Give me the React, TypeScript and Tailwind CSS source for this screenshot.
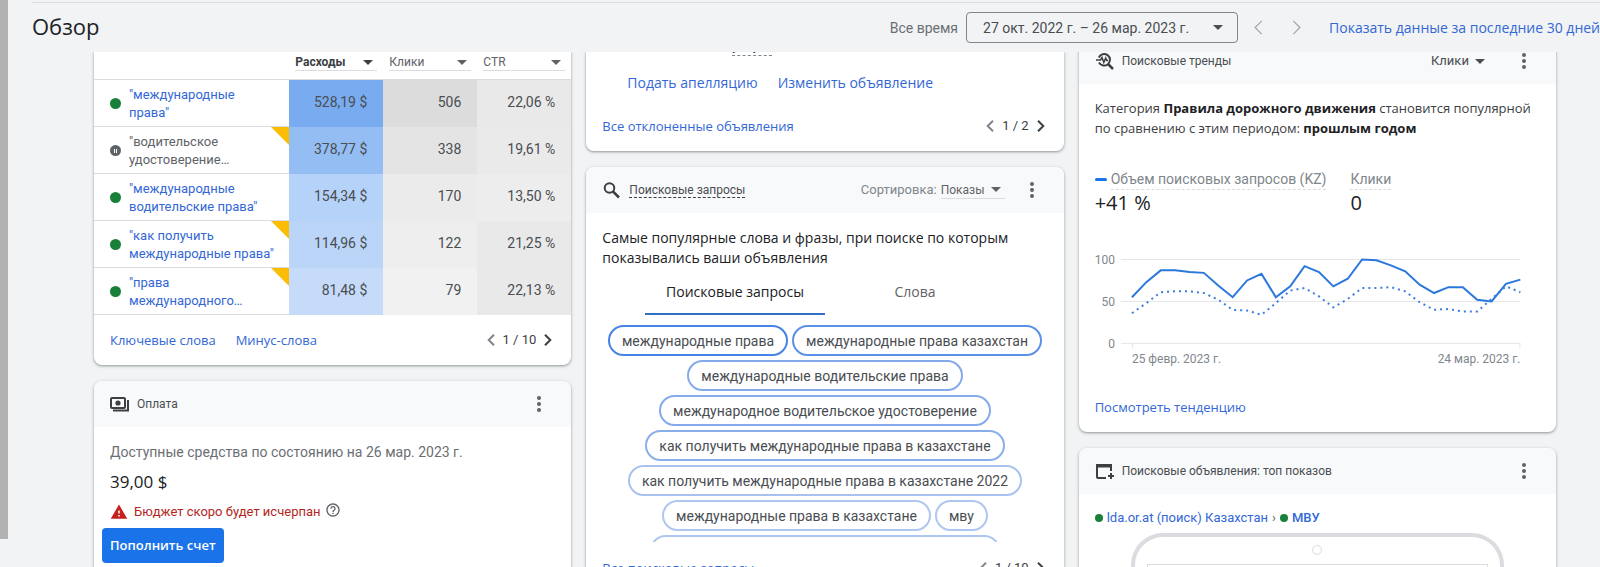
import type { ReactNode } from 'react';
import { MdHelpOutline, MdWarning } from 'react-icons/md';

const keywords = [
    { lines: ['"международные', 'права"'], cost: '528,19 $', clicks: '506', ctr: '22,06 %', costBg: 'bg-[#78abf0]', clicksBg: 'bg-[#dcdcdc]', ctrBg: 'bg-[#e9e9e9]' },
    { lines: ['"водительское', 'удостоверение…'], cost: '378,77 $', clicks: '338', ctr: '19,61 %', costBg: 'bg-[#94bdf4]', clicksBg: 'bg-[#e4e4e4]', ctrBg: 'bg-[#eaeaea]', paused: true, flagged: true },
    { lines: ['"международные', 'водительские права"'], cost: '154,34 $', clicks: '170', ctr: '13,50 %', costBg: 'bg-[#b5d3f9]', clicksBg: 'bg-[#ebebeb]', ctrBg: 'bg-[#ededed]' },
    { lines: ['"как получить', 'международные права"'], cost: '114,96 $', clicks: '122', ctr: '21,25 %', costBg: 'bg-[#bbd5f8]', clicksBg: 'bg-[#eeeeee]', ctrBg: 'bg-[#e9e9e9]', flagged: true },
    { lines: ['"права', 'международного…'], cost: '81,48 $', clicks: '79', ctr: '22,13 %', costBg: 'bg-[#c6dbf9]', clicksBg: 'bg-[#f1f1f1]', ctrBg: 'bg-[#e9e9e9]', flagged: true },
];

const queries = [
    { text: 'международные права', border: 'border-[#4583e6]' },
    { text: 'международные права казахстан', border: 'border-[#5a90e8]' },
    { text: 'международные водительские права', border: 'border-[#84aaeb]' },
    { text: 'международное водительское удостоверение', border: 'border-[#84aaeb]' },
    { text: 'как получить международные права в казахстане', border: 'border-[#8aaeea]' },
    { text: 'как получить международные права в казахстане 2022', border: 'border-[#a8c2f0]' },
    { text: 'международные права в казахстане', border: 'border-[#aec6f0]' },
    { text: 'мву', border: 'border-[#aec6f0]' },
    { text: 'международные водительские права рк', border: 'border-[#aec6f0]', wide: true },
];

const current = [55, 73, 87, 87, 85, 84, 69, 55, 75, 83, 55, 68, 92, 85, 68, 77, 100, 99, 93, 86, 70, 60, 67, 67, 52, 50, 71, 76];
const previous = [36, 48, 61, 62, 62, 60, 52, 40, 39, 34, 48, 63, 66, 56, 43, 53, 66, 66, 67, 62, 49, 40, 41, 38, 38, 53, 68, 61];

const toPoints = (values: number[]) =>
    values.map((v, i) => `${(37 + (i * 389) / 27).toFixed(1)},${(94.5 - v * 0.84).toFixed(1)}`).join(' ');

const Icon = ({ children }: { children: ReactNode }) => (
    <svg viewBox="0 0 20 20" className="size-5 shrink-0 text-[#3c4043]" fill="none" stroke="currentColor" strokeWidth="2">
        {children}
    </svg>
);

const Arrow = ({ className = '' }: { className?: string }) => (
    <svg viewBox="0 0 10 5" className={`w-[10px] h-[5px] fill-current ${className}`}>
        <path d="M0 0h10L5 5z" />
    </svg>
);

const Chevron = ({ dir, className }: { dir: 'left' | 'right'; className: string }) => (
    <svg viewBox="0 0 8 12" className={`fill-none stroke-current ${className}`}>
        <path d={dir === 'left' ? 'M7 .7 1.7 6 7 11.3' : 'M1 .7 6.3 6 1 11.3'} />
    </svg>
);

const Dropdown = ({ label, value, id, className = '' }: { label: string; value: string; id: string; className?: string }) => (
    <span className={`relative flex items-center ${className}`}>
        <select id={id} aria-label={label} className="w-full appearance-none bg-transparent outline-none pr-5">
            <option>{value}</option>
        </select>
        <Arrow className="absolute right-1 pointer-events-none" />
    </span>
);

const MoreButton = () => (
    <button type="button" aria-label="Ещё" className="w-4 h-6 flex items-center justify-center text-[#5f6368]">
        <svg viewBox="0 0 4 16" className="w-1 h-4 fill-current">
            <circle cx="2" cy="2" r="2" />
            <circle cx="2" cy="8" r="2" />
            <circle cx="2" cy="14" r="2" />
        </svg>
    </button>
);

const Pager = ({ total }: { total: number }) => (
    <div className="flex items-center gap-2 font-['Roboto',sans-serif] text-[13px] leading-5 text-[#3c4043]">
        <button type="button" aria-label="Назад" className="text-[#80868b]">
            <Chevron dir="left" className="w-2 h-3 stroke-2" />
        </button>
        <span>1 / {total}</span>
        <button type="button" aria-label="Вперёд" className="text-[#3c4043]">
            <Chevron dir="right" className="w-2 h-3 stroke-2" />
        </button>
    </div>
);

const Card = ({ children, className = '' }: { children: ReactNode; className?: string }) => (
    <section className={`bg-white rounded-lg overflow-hidden shadow-[0_1px_2px_0_rgba(60,64,67,0.35),0_1px_3px_1px_rgba(60,64,67,0.15)] ${className}`}>
        {children}
    </section>
);

const CardHeader = ({ icon, children, action }: { icon: ReactNode; children: ReactNode; action?: ReactNode }) => (
    <header className="h-[46px] bg-[#f8f9fa] pl-4 pr-6 flex items-center gap-[7px] text-[#5f6368]">
        {icon}
        <h2 className="text-xs flex-1 text-[#4a4d51]">{children}</h2>
        {action}
        <MoreButton />
    </header>
);

const TextLink = ({ children }: { children: ReactNode }) => (
    <a href="#" className="font-['Open_Sans',sans-serif] font-medium text-[#3367d6]">{children}</a>
);

const KeywordsCard = () => (
    <Card className="rounded-t-none">
        <table className="w-full table-fixed border-separate border-spacing-0">
            <thead>
                <tr className="text-xs text-[#5f6368]">
                    <th className="h-7 p-0 border-b border-[#dadce0]" aria-label="Ключевое слово" />
                    <th className="w-[94px] p-0 px-[6px] pb-[6px] border-b border-[#dadce0]">
                        <Dropdown id="col-cost" label="Столбец 1" value="Расходы" className="border-b border-[#dadce0] font-bold text-[#3c4043]" />
                    </th>
                    <th className="w-[94px] p-0 px-[6px] pb-[6px] font-normal border-b border-[#dadce0]">
                        <Dropdown id="col-clicks" label="Столбец 2" value="Клики" className="border-b border-[#dadce0]" />
                    </th>
                    <th className="w-[94px] p-0 px-[6px] pb-[6px] font-normal border-b border-[#dadce0]">
                        <Dropdown id="col-ctr" label="Столбец 3" value="CTR" className="border-b border-[#dadce0]" />
                    </th>
                </tr>
            </thead>
            <tbody>
                {keywords.map((k) => (
                    <tr key={k.lines.join(' ')} className="text-sm text-right text-[#4a4d51]">
                        <td className="relative h-[47px] p-0 pl-4 pt-px text-left border-b border-[#dadce0]">
                            <div className="flex items-center gap-2 text-[13px] leading-[18px]">
                                {k.paused ? (
                                    <span className="size-[11px] rounded-full bg-[#5f6368] flex items-center justify-center gap-px">
                                        <i className="w-px h-1 bg-white" />
                                        <i className="w-px h-1 bg-white" />
                                    </span>
                                ) : (
                                    <span className="size-[11px] rounded-full bg-[#188038]" />
                                )}
                                <a href="#" className={k.paused ? 'text-[#5f6368]' : 'text-[#3367d6]'}>
                                    {k.lines[0]}
                                    <br />
                                    {k.lines[1]}
                                </a>
                            </div>
                            {k.flagged && (
                                <svg viewBox="0 0 18 18" className="absolute top-0 right-0 size-[18px]">
                                    <path d="M0 0h18v18z" fill="#fbbc04" />
                                </svg>
                            )}
                        </td>
                        <td className={`p-0 pr-4 pb-1 ${k.costBg}`}>{k.cost}</td>
                        <td className={`p-0 pr-4 pb-1 ${k.clicksBg}`}>{k.clicks}</td>
                        <td className={`p-0 pr-4 pb-1 ${k.ctrBg}`}>{k.ctr}</td>
                    </tr>
                ))}
            </tbody>
        </table>
        <footer className="pt-[15px] pb-[15px] pl-4 pr-[19px] flex items-center justify-between text-[13px] leading-5">
            <div className="flex gap-5">
                <TextLink>Ключевые слова</TextLink>
                <TextLink>Минус-слова</TextLink>
            </div>
            <Pager total={10} />
        </footer>
    </Card>
);

const BillingCard = () => (
    <Card>
        <CardHeader
            icon={
                <Icon>
                    <rect x="1" y="4" width="14" height="10" rx="1" />
                    <circle cx="8" cy="9" r="2.600" fill="currentColor" stroke="none" />
                    <path d="M18 6v10.500H3" />
                </Icon>
            }
        >
            Оплата
        </CardHeader>
        <div className="px-4 pt-[15px] pb-8">
            <p className="text-sm leading-5 text-[#6b6f74]">Доступные средства по состоянию на 26 мар. 2023 г.</p>
            <p className="mt-2 font-['Open_Sans',sans-serif] text-[17px] leading-6 text-[#202124]">39,00 $</p>
            <div className="mt-2 flex items-center text-[13px] leading-5 text-[#b3261e]">
                <MdWarning className="size-[18px] text-[#c5221f]" />
                <span className="ml-[6px]">Бюджет скоро будет исчерпан</span>
                <button type="button" aria-label="Справка" className="ml-1 mb-1 text-[#5f6368]">
                    <MdHelpOutline className="size-4" />
                </button>
            </div>
            <button type="button" className="mt-[6px] -ml-2 h-[35px] px-2 rounded bg-[#1a73e8] font-['Open_Sans',sans-serif] text-[13px] font-semibold text-white">
                Пополнить счет
            </button>
        </div>
    </Card>
);

const RejectedAdsCard = () => (
    <Card className="rounded-t-none">
        <div className="pl-[146px] -mt-[15px] flex">
            <span className="text-[13px] leading-[18px] border-b border-dashed border-[#80868b] text-[#3c4043]">услуги</span>
        </div>
        <div className="mt-[17px] pl-[41px] flex gap-5 text-sm leading-5">
            <TextLink>Подать апелляцию</TextLink>
            <TextLink>Изменить объявление</TextLink>
        </div>
        <footer className="pt-[23px] pb-[15px] pl-4 pr-[19px] flex items-center justify-between text-[13px] leading-5">
            <TextLink>Все отклоненные объявления</TextLink>
            <Pager total={2} />
        </footer>
    </Card>
);

const QueriesCard = () => (
    <Card>
        <CardHeader
            icon={
                <Icon>
                    <circle cx="7.500" cy="8" r="4.800" />
                    <path d="m11 11.500 6 6" strokeWidth="2.500" />
                </Icon>
            }
            action={
                <div className="flex items-center gap-1 mr-3 text-[13px]">
                    <label htmlFor="sort" className="text-[#80868b]">Сортировка:</label>
                    <Dropdown id="sort" label="Сортировка" value="Показы" className="text-xs border-b border-[#dadce0]" />
                </div>
            }
        >
            <span className="border-b border-dashed border-[#3c4043]">Поисковые запросы</span>
        </CardHeader>
        <div className="px-4 pt-[15px] font-['Open_Sans',sans-serif]">
            <p className="text-sm leading-5 font-medium text-[#202124]">
                Самые популярные слова и фразы, при поиске по которым показывались ваши объявления
            </p>
            <div role="tablist" className="flex justify-center text-sm leading-5 font-medium">
                <button type="button" role="tab" aria-selected="true" className="w-[180px] pt-[14px] pb-[11px] border-b-2 border-[#2f6fc4] text-[#202124]">
                    Поисковые запросы
                </button>
                <button type="button" role="tab" aria-selected="false" className="w-[180px] pt-[14px] pb-[11px] border-b-2 border-transparent text-[#5f6368]">
                    Слова
                </button>
            </div>
            <div className="mt-[10px] h-[217px] overflow-hidden flex flex-wrap content-start justify-center gap-1 font-['Roboto',sans-serif]">
                {queries.map((q) => (
                    <button
                        key={q.text}
                        type="button"
                        className={`h-[31px] rounded-full border-2 text-sm text-[#4a4d51] ${q.border} ${q.wide ? 'px-10' : 'px-3'}`}
                    >
                        {q.text}
                    </button>
                ))}
            </div>
        </div>
        <footer className="pt-4 pb-4 pl-4 pr-[19px] flex items-center justify-between text-[13px] leading-5">
            <TextLink>Все поисковые запросы</TextLink>
            <Pager total={10} />
        </footer>
    </Card>
);

const TrendChart = () => (
    <svg viewBox="0 0 446 122" className="mt-[34px] w-full font-['Roboto',sans-serif] text-xs" role="img" aria-label="Объем поисковых запросов">
        <g stroke="#e4e5e7" strokeWidth="1">
            <path d="M26 10.5h400M26 52.5h400M26 94.5h400M37.5 94v5M425.5 94v5" fill="none" />
        </g>
        <g fill="#80868b" textAnchor="end">
            <text x="20" y="15">100</text>
            <text x="20" y="57">50</text>
            <text x="20" y="99">0</text>
            <text x="426" y="114">24 мар. 2023 г.</text>
        </g>
        <text x="37" y="114" fill="#80868b">25 февр. 2023 г.</text>
        <polyline points={toPoints(previous)} fill="none" stroke="#3b7ddd" strokeWidth="2" strokeDasharray="2 4" />
        <polyline points={toPoints(current)} fill="none" stroke="#2b78dc" strokeWidth="2" />
    </svg>
);

const TrendsCard = () => (
    <Card className="-mt-[14px]">
        <CardHeader
            icon={
                <Icon>
                    <path d="M3.800 6.500A5.800 5.800 0 1 1 4 11.500" />
                    <path d="m13 13 5 5" strokeWidth="2.500" />
                    <path d="M1 9h4.500L7 6.500l1.800 5L10.700 7l1 2.500H13" strokeWidth="1.500" />
                </Icon>
            }
            action={<Dropdown id="trend-metric" label="Показатель" value="Клики" className="mr-5 text-[13px] text-[#4a4d51]" />}
        >
            Поисковые тренды
        </CardHeader>
        <div className="px-4 pt-[14px] pb-[14px]">
            <p className="font-['Open_Sans',sans-serif] text-[13px] leading-5 text-[#3c4043]">
                Категория <b className="text-[#202124]">Правила дорожного движения</b> становится популярной по сравнению с этим периодом:{' '}
                <b className="text-[#202124]">прошлым годом</b>
            </p>
            <div className="mt-[31px] flex gap-6 text-sm leading-5 text-[#80868b]">
                <div>
                    <div className="flex items-center gap-1">
                        <span className="w-3 h-[3px] rounded-sm bg-[#1a73e8]" />
                        <span className="border-b border-dashed border-[#dadce0]">Объем поисковых запросов (KZ)</span>
                    </div>
                    <div className="mt-px font-['Open_Sans',sans-serif] text-xl leading-6 text-[#202124]">+41 %</div>
                </div>
                <div>
                    <div className="border-b border-dashed border-[#dadce0]">Клики</div>
                    <div className="mt-px font-['Open_Sans',sans-serif] text-xl leading-6 text-[#202124]">0</div>
                </div>
            </div>
            <TrendChart />
            <div className="mt-[26px] text-[13px] leading-5">
                <TextLink>Посмотреть тенденцию</TextLink>
            </div>
        </div>
    </Card>
);

const TopAdsCard = () => (
    <Card>
        <CardHeader
            icon={
                <Icon>
                    <path d="M11 17H3a1 1 0 0 1-1-1V4h14v6" />
                    <path d="M1 4.500q0-1.500 1.500-1.500h13q1.500 0 1.500 1.500v2H1z" fill="currentColor" stroke="none" />
                    <path d="M16 12v6M13 15h6" />
                </Icon>
            }
        >
            Поисковые объявления: топ показов
        </CardHeader>
        <div className="px-4 pt-[14px]">
            <div className="flex items-center gap-1 text-[13px] leading-5 text-[#3367d6]">
                <span className="size-2 rounded-full bg-[#188038]" />
                <a href="#">lda.or.at (поиск) Казахстан</a>
                <span className="text-[#5f6368]">›</span>
                <span className="size-2 rounded-full bg-[#188038]" />
                <a href="#" className="font-medium">МВУ</a>
            </div>
            <div className="mt-[5px] mx-9 h-20 px-3 pt-2 rounded-t-[32px] border-4 border-b-0 border-[#dadce0]">
                <div className="mx-auto size-[10px] rounded-full border border-[#dadce0]" />
                <div className="mt-[9px] h-10 border border-b-0 border-[#dadce0]" />
            </div>
        </div>
    </Card>
);

const App = () => {
    return (
        <div className="h-screen overflow-hidden flex bg-[#f1f3f4] font-['Roboto',sans-serif]">
            <div className="w-2 shrink-0 mb-7 bg-[#b2b2b2]" />
            <div className="flex-1 min-w-0 flex flex-col">
                <header className="ml-6 mt-[2px] h-[50px] shrink-0 border-t border-[#dadce0] flex items-center justify-between text-sm text-[#5f6368]">
                    <h1 className="pb-1 font-['Open_Sans',sans-serif] text-[22px] leading-7 text-[#202124]">Обзор</h1>
                    <div className="flex items-center">
                        <span className="text-[#6b6f74]">Все время</span>
                        <button type="button" className="ml-2 h-[31px] w-[272px] pl-4 pr-[14px] flex items-center justify-between rounded border border-[#80868b] text-[#4a4d51]">
                            27 окт. 2022 г. – 26 мар. 2023 г.
                            <Arrow />
                        </button>
                        <button type="button" aria-label="Предыдущий период" className="ml-[15px] text-[#a5a8ac]">
                            <Chevron dir="left" className="w-[10px] h-[15px]" />
                        </button>
                        <button type="button" aria-label="Следующий период" className="ml-[29px] mr-[27px] text-[#a5a8ac]">
                            <Chevron dir="right" className="w-[10px] h-[15px]" />
                        </button>
                        <TextLink>Показать данные за последние 30 дней</TextLink>
                    </div>
                </header>
                <main className="flex-1 min-h-0 overflow-hidden pl-[86px] pr-11 grid grid-cols-3 gap-[15px] items-start">
                    <div className="flex flex-col gap-4">
                        <KeywordsCard />
                        <BillingCard />
                    </div>
                    <div className="flex flex-col gap-4">
                        <RejectedAdsCard />
                        <QueriesCard />
                    </div>
                    <div className="flex flex-col gap-4">
                        <TrendsCard />
                        <TopAdsCard />
                    </div>
                </main>
            </div>
        </div>
    );
};

export default App;
